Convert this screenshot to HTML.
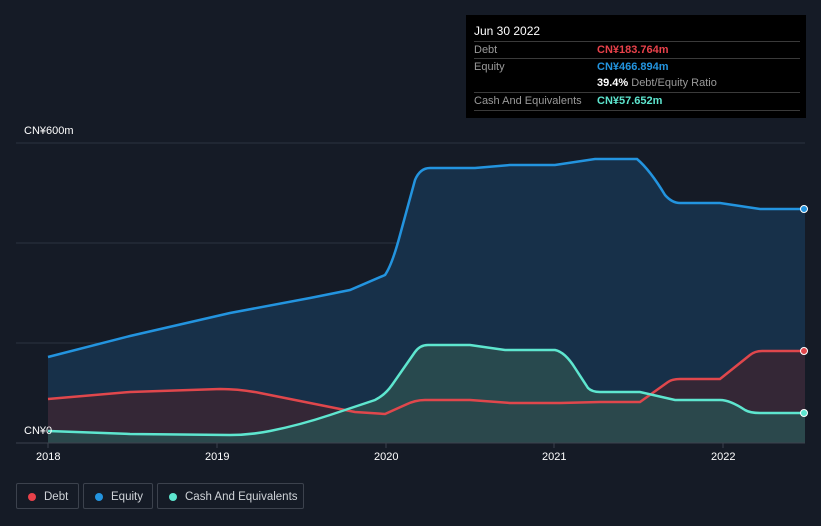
<!DOCTYPE html>
<html><head><meta charset="utf-8"><style>
body{margin:0;background:#151b26;font-family:"Liberation Sans",sans-serif;width:821px;height:526px;overflow:hidden;position:relative}
.tt{position:absolute;left:466px;top:15px;width:340px;height:103px;background:#000;color:#fff;font-size:11px}
.tt .r{position:absolute;left:8px;right:6px;border-top:1px solid #3a3a3a;height:17px;line-height:17px;color:#9a9a9a}
.tt .v{position:absolute;left:123px;font-weight:bold}
.leg{position:absolute;top:483px;height:26px;border:1px solid #3c424d;border-radius:2px;color:#cfd3d8;font-size:11.5px;line-height:26px;box-sizing:border-box}
.leg i{position:absolute;left:11px;top:9px;width:8px;height:8px;border-radius:50%}
.leg span{position:absolute;left:27px}
.ax{position:absolute;color:#fff;font-size:11px}
</style></head><body>
<svg width="821" height="526" style="position:absolute;left:0;top:0">
<line x1="16" y1="143" x2="805" y2="143" stroke="#2c3340"/>
<line x1="16" y1="243" x2="805" y2="243" stroke="#2c3340"/>
<line x1="16" y1="343" x2="805" y2="343" stroke="#2c3340"/>
<path d="M48,357 L130,336 L230,313 L310,298 L350,290 L385,275 Q392,265 400,235 L415,180 Q420,168 430,168 L475,168 L510,165 L555,165 L595,159 L637,159 Q650,170 665,195 Q672,203 680,203 L720,203 L760,209 L805,209 L805,443 L48,443Z" fill="#173049"/>
<path d="M48,399 L130,392 L220,389 Q240,389 260,393 L320,405 L355,412 L385,414 L405,405 Q415,400 425,400 L470,400 L510,403 L560,403 L600,402 L640,402 L668,382 Q672,379 680,379 L720,379 L750,355 Q755,351 762,351 L805,351 L805,443 L48,443Z" fill="#3a2633" opacity="0.85"/>
<path d="M48,431 L130,434 L230,435 Q250,435 270,431 Q300,425 330,415 L375,400 Q385,395 392,385 L415,352 Q420,345 428,345 L470,345 L505,350 L555,350 Q565,352 575,368 L588,388 Q592,392 600,392 L640,392 L675,400 L720,400 Q730,400 745,410 Q750,413 760,413 L805,413 L805,443 L48,443Z" fill="#2a4d4f" opacity="0.9"/>
<path d="M48,357 L130,336 L230,313 L310,298 L350,290 L385,275 Q392,265 400,235 L415,180 Q420,168 430,168 L475,168 L510,165 L555,165 L595,159 L637,159 Q650,170 665,195 Q672,203 680,203 L720,203 L760,209 L805,209" fill="none" stroke="#2394df" stroke-width="2.5"/>
<path d="M48,399 L130,392 L220,389 Q240,389 260,393 L320,405 L355,412 L385,414 L405,405 Q415,400 425,400 L470,400 L510,403 L560,403 L600,402 L640,402 L668,382 Q672,379 680,379 L720,379 L750,355 Q755,351 762,351 L805,351" fill="none" stroke="#e0474c" stroke-width="2.5"/>
<path d="M48,431 L130,434 L230,435 Q250,435 270,431 Q300,425 330,415 L375,400 Q385,395 392,385 L415,352 Q420,345 428,345 L470,345 L505,350 L555,350 Q565,352 575,368 L588,388 Q592,392 600,392 L640,392 L675,400 L720,400 Q730,400 745,410 Q750,413 760,413 L805,413" fill="none" stroke="#5ee6cf" stroke-width="2.5"/>
<line x1="16" y1="443" x2="805" y2="443" stroke="#3c424d"/>
<g stroke="#3c424d"><line x1="48" y1="443" x2="48" y2="448"/><line x1="217" y1="443" x2="217" y2="448"/><line x1="386" y1="443" x2="386" y2="448"/><line x1="554" y1="443" x2="554" y2="448"/><line x1="723" y1="443" x2="723" y2="448"/></g>
<circle cx="804" cy="209" r="3.5" fill="#2394df" stroke="#fff" stroke-width="1"/>
<circle cx="804" cy="351" r="3.5" fill="#e0474c" stroke="#fff" stroke-width="1"/>
<circle cx="804" cy="413" r="3.5" fill="#5ee6cf" stroke="#fff" stroke-width="1"/>
</svg>
<div class="ax" style="left:24px;top:125px">CN¥600m</div>
<div class="ax" style="left:24px;top:425px">CN¥0</div>
<div class="ax" style="left:36px;top:451px">2018</div>
<div class="ax" style="left:205px;top:451px">2019</div>
<div class="ax" style="left:374px;top:451px">2020</div>
<div class="ax" style="left:542px;top:451px">2021</div>
<div class="ax" style="left:711px;top:451px">2022</div>
<div class="tt">
<div style="position:absolute;left:8px;top:9px;font-size:12px">Jun 30 2022</div>
<div class="r" style="top:26px">Debt<span class="v" style="color:#e8414a">CN¥183.764m</span></div>
<div class="r" style="top:43px">Equity<span class="v" style="color:#2394df">CN¥466.894m</span></div>
<div class="r" style="top:60px;border-top:none"><span class="v" style="color:#fff">39.4% <span style="font-weight:normal;color:#9a9a9a">Debt/Equity Ratio</span></span></div>
<div class="r" style="top:77px">Cash And Equivalents<span class="v" style="color:#5ee6cf">CN¥57.652m</span></div>
<div class="r" style="top:95px;height:0"></div>
</div>
<div class="leg" style="left:16px;width:63px"><i style="background:#e8414a"></i><span>Debt</span></div>
<div class="leg" style="left:83px;width:70px"><i style="background:#2394df"></i><span>Equity</span></div>
<div class="leg" style="left:157px;width:147px"><i style="background:#5ee6cf"></i><span>Cash And Equivalents</span></div>
</body></html>
